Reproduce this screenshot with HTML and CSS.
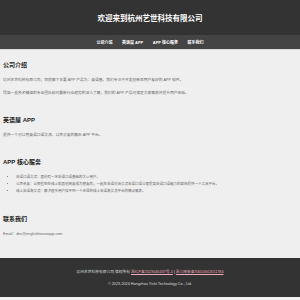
FILE: index.html
```html
<!DOCTYPE html>
<html lang="zh-CN">
<head>
  <meta charset="UTF-8">
  <meta name="viewport" content="width=device-width, initial-scale=1.0">
  <title>杭州艺世科技有限公司</title>
  <link rel="stylesheet" href="styles.css">
</head>
<body>
  <header class="site-header">
    <h1>欢迎来到杭州艺世科技有限公司</h1>
  </header>
  <nav class="site-nav">
    <a href="#about">公司介绍</a>
    <a href="#app">英语屋 APP</a>
    <a href="#services">APP 核心服务</a>
    <a href="#contact">联系我们</a>
  </nav>

  <main class="content">
    <section id="about">
      <h2>公司介绍</h2>
      <p>杭州艺世科技有限公司，目前旗下主要 APP 产品为：英语屋。我们专注于开发创新且用户友好的 APP 软件。</p>
      <p>凭借一支技术精湛的专业团队和对最新行业趋势的深入了解，我们的 APP 产品可满足大家需求并提升用户体验。</p>
    </section>

    <section id="app">
      <h2>英语屋 APP</h2>
      <p>提供一个可以用英语口语交流、以声会友的聊天 APP 平台。</p>
    </section>

    <section id="services">
      <h2>APP 核心服务</h2>
      <ul class="service-list">
        <li>英语口语交流：面向有一定英语口语基础的大众用户。</li>
        <li>以声会友：让那些想在线上和其他网友成为朋友的，一起在英语对话交流英语口语以便提高英语口语能力的群体提供一个工具平台。</li>
        <li>线上英语角交流：解决很多用户找不到一个合适的线上英语角交流平台的痛点需求。</li>
      </ul>
    </section>

    <section id="contact">
      <h2>联系我们</h2>
      <p>Email：dev@englishhouseapp.com</p>
    </section>
  </main>

  <footer class="site-footer">
    <p>杭州艺世科技有限公司 版权所有 <a href="#">浙ICP备2023045437号-1</a> | <a href="#">浙公网安备33010502011784</a></p>
    <p>© 2023-2024 Hangzhou Yishi Technology Co., Ltd.</p>
  </footer>
</body>
</html>
```

FILE: styles.css
```css
body {
  margin: 0;
  background-color: #efefef;
  color: #666;
  font-family: "Liberation Sans", "Noto Sans CJK SC", sans-serif;
}
.site-header {
  height: 35px;
  display: flex;
  align-items: center;
  justify-content: center;
  background-color: #333;
}
.site-header h1 {
  margin: 0;
  color: #fff;
  font-size: 7.5px;
}
.site-nav {
  height: 14px;
  display: flex;
  align-items: center;
  justify-content: center;
  background-color: #444;
  border-bottom: 1px solid #ddd;
}
.site-nav a {
  margin: 0 4.75px;
  color: #fff;
  font-size: 4px;
  font-weight: bold;
  text-decoration: none;
}
.content {
  padding: 12px 3px 0;
}
.content section {
  margin-bottom: 21px;
}
.content h2 {
  margin: 0 0 7.5px;
  color: #222;
  font-size: 6px;
  line-height: 1.2;
}
.content p {
  margin: 7.5px 0;
  font-size: 3.75px;
  line-height: 1.6;
}
.service-list {
  margin: 7.5px 0;
  padding-left: 13px;
}
.service-list li {
  font-size: 3.5px;
  line-height: 7.25px;
}
.site-footer {
  padding: 4.5px 5px;
  background-color: #333;
  color: #ddd;
  text-align: center;
}
.site-footer p {
  margin: 6px 0;
  font-size: 3.75px;
  line-height: 6px;
}
.site-footer a {
  color: #f0a8bd;
}
```
